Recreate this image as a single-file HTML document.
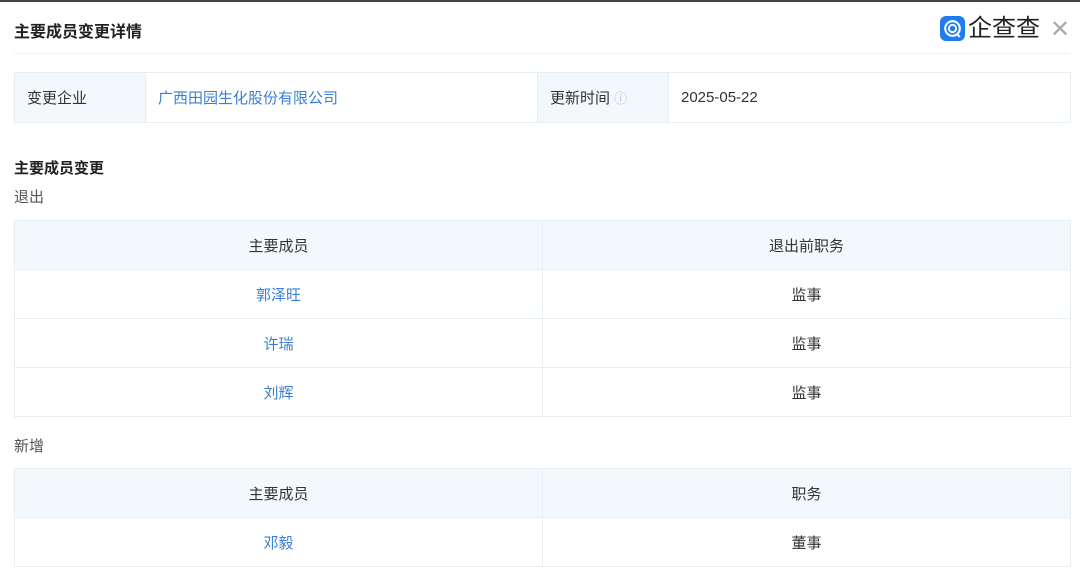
<!DOCTYPE html>
<html><head><meta charset="utf-8"><style>
*{margin:0;padding:0;box-sizing:border-box}
body{width:1080px;height:570px;overflow:hidden;background:#fff;font-family:"Liberation Sans","Noto Sans CJK SC",sans-serif;color:#333;position:relative}
.topline{position:absolute;left:0;top:0;width:1080px;height:2px;background:#444}
.title{position:absolute;left:14px;top:18px;font-size:16px;font-weight:bold;color:#222}
.sep{position:absolute;left:14px;top:53px;width:1056px;height:1px;background:#eef0f3}
.logo{position:absolute;left:940px;top:16px;display:flex;align-items:center}
.logo .ic{width:25px;height:25px;border-radius:6px;background:#1f7cf0;position:relative}
.logo span{font-size:24px;color:#222;margin-left:3px;letter-spacing:0px;line-height:25px}
.close{position:absolute;left:1050px;top:19px;font-size:24px;color:#aaa;line-height:22px}
table{position:absolute;left:14px;border-collapse:collapse;font-size:15px}
td{border:1px solid #e6eef6;height:49px}
.info{top:72px;width:1057px}
.info td{height:50px;padding-left:12px}
.lab{background:#f3f8fc;color:#333}
.blue{color:#3a7fd5}
.sub{position:absolute;left:14px;font-size:15px;color:#555}
.h2{position:absolute;left:14px;top:157px;font-size:15px;font-weight:bold;color:#222}
.t{width:1057px;text-align:center}
.t tr.h td{background:#f3f8fc}
</style></head><body>
<div class="topline"></div>
<div class="title">主要成员变更详情</div>
<div class="logo"><div class="ic"><svg width="25" height="25" viewBox="0 0 24 24"><circle cx="12" cy="12" r="7" fill="none" stroke="#fff" stroke-width="2"/><circle cx="12" cy="12" r="3.5" fill="none" stroke="#fff" stroke-width="1.8"/><path d="M16 17l3 3" stroke="#fff" stroke-width="2"/></svg></div><span>企查查</span></div>
<div class="close">✕</div>
<div class="sep"></div>
<table class="info"><tr><td class="lab" style="width:131px">变更企业</td><td class="blue" style="width:392px">广西田园生化股份有限公司</td><td class="lab" style="width:131px">更新时间 <span style="color:#bbb;font-size:13px">ⓘ</span></td><td>2025-05-22</td></tr></table>
<div class="h2">主要成员变更</div>
<div class="sub" style="top:186px">退出</div>
<table class="t" style="top:220px"><tr class="h"><td style="width:528px">主要成员</td><td>退出前职务</td></tr>
<tr><td class="blue">郭泽旺</td><td>监事</td></tr>
<tr><td class="blue">许瑞</td><td>监事</td></tr>
<tr><td class="blue">刘辉</td><td>监事</td></tr></table>
<div class="sub" style="top:435px">新增</div>
<table class="t" style="top:468px"><tr class="h"><td style="width:528px">主要成员</td><td>职务</td></tr>
<tr><td class="blue">邓毅</td><td>董事</td></tr></table>
</body></html>
